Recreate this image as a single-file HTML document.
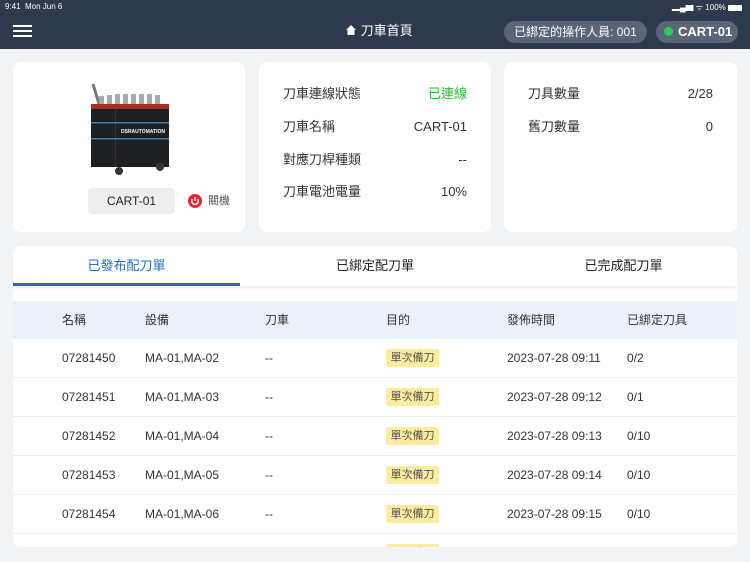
<!DOCTYPE html>
<html><head><meta charset="utf-8"><style>
*{margin:0;padding:0;box-sizing:border-box}
body{width:750px;height:562px;background:#f2f3f5;font-family:"Liberation Sans","Noto Sans CJK TC",sans-serif;position:relative;overflow:hidden;color:#333}
.top{position:absolute;left:0;top:0;width:750px;height:49px;background:#2e3a4b;color:#fff}
.card{position:absolute;background:#fff;border-radius:8px}
.row{position:absolute;font-size:13px;color:#333;line-height:18px;height:18px}
.abs{position:absolute}
span.abs{line-height:16px}
</style></head><body>
<div class="top">
 <div class="abs" style="left:5px;top:2px;font-size:8px">9:41&nbsp; Mon Jun 6</div>
 <div class="abs" style="right:8px;top:2px;font-size:8px">▂▄▆ ᯤ 100% <span style="display:inline-block;width:14px;height:6px;background:#fff;border-radius:1px;vertical-align:middle"></span></div>
 <div class="abs" style="left:13px;top:25px;width:19px;height:2px;background:#fff;box-shadow:0 5px 0 #fff,0 10px 0 #fff"></div>
 <div class="abs" style="left:345px;top:22px;font-size:13px;line-height:18px">
  <svg width="12" height="12" viewBox="0 0 12 12" style="vertical-align:-1px"><path d="M6 1L1 6h1.5v5h7V6H11z" fill="#fff"/></svg>&nbsp;刀車首頁</div>
 <div class="abs" style="left:504px;top:21px;width:143px;height:22px;border-radius:11px;background:#5a6577;font-size:12px;text-align:center;line-height:22px">已綁定的操作人員: 001</div>
 <div class="abs" style="left:656px;top:21px;width:82px;height:22px;border-radius:11px;background:#5a6577;font-size:13px;font-weight:bold;line-height:22px;padding-left:8px"><span style="display:inline-block;width:9px;height:9px;border-radius:50%;background:#2ecc55;margin-right:5px"></span>CART-01</div>
</div>

<div class="card" style="left:13px;top:62px;width:232px;height:170px">
 <svg class="abs" style="left:72px;top:20px" width="90" height="96" viewBox="0 0 90 96">
  <line x1="8" y1="2" x2="14" y2="22" stroke="#777" stroke-width="3"/>
  <g fill="#a9a9a9"><rect x="14" y="14" width="5" height="11"/><rect x="22" y="13" width="5" height="11"/><rect x="30" y="12" width="5" height="11"/><rect x="38" y="12" width="5" height="11"/><rect x="46" y="12" width="5" height="11"/><rect x="54" y="12" width="5" height="11"/><rect x="62" y="12" width="5" height="11"/><rect x="70" y="13" width="5" height="11"/></g>
  <rect x="6" y="22" width="78" height="7" fill="#a03020"/>
  <rect x="6" y="27" width="78" height="58" fill="#1e1f22"/>
  <rect x="30" y="27" width="1" height="58" fill="#333"/>
  <rect x="6" y="40" width="78" height="1.5" fill="#3a7fb5"/><rect x="6" y="56" width="78" height="1.5" fill="#3a7fb5"/>
  <text x="36" y="51" font-size="5" font-weight="bold" fill="#fff" font-family="Liberation Sans">DSRAUTOMATION</text>
  <circle cx="34" cy="89" r="4" fill="#333"/><circle cx="75" cy="85" r="4" fill="#333"/>
 </svg>
 <div class="abs" style="left:75px;top:126px;width:87px;height:26px;background:#eeeeee;border-radius:4px;text-align:center;line-height:26px;font-size:12px;color:#222">CART-01</div>
 <div class="abs" style="left:175px;top:132px;width:14px;height:14px;border-radius:50%;background:#e5262e"></div>
 <svg class="abs" style="left:175px;top:132px" width="14" height="14" viewBox="0 0 14 14"><path d="M4.5 5a3.3 3.3 0 1 0 5 0" stroke="#fff" stroke-width="1.4" fill="none"/><line x1="7" y1="3" x2="7" y2="7" stroke="#fff" stroke-width="1.4"/></svg>
 <div class="abs" style="left:195px;top:131px;font-size:11px;color:#555;line-height:16px">關機</div>
</div>

<div class="card" style="left:259px;top:62px;width:232px;height:170px">
 <div class="row" style="left:24px;top:23px">刀車連線狀態</div><div class="row" style="right:24px;top:23px;color:#2eb82e">已連線</div>
 <div class="row" style="left:24px;top:56px">刀車名稱</div><div class="row" style="right:24px;top:56px">CART-01</div>
 <div class="row" style="left:24px;top:89px">對應刀桿種類</div><div class="row" style="right:24px;top:89px">--</div>
 <div class="row" style="left:24px;top:121px">刀車電池電量</div><div class="row" style="right:24px;top:121px">10%</div>
</div>

<div class="card" style="left:504px;top:62px;width:233px;height:170px">
 <div class="row" style="left:24px;top:23px">刀具數量</div><div class="row" style="right:24px;top:23px">2/28</div>
 <div class="row" style="left:24px;top:56px">舊刀數量</div><div class="row" style="right:24px;top:56px">0</div>
</div>

<div class="card" style="left:13px;top:246px;width:724px;height:301px;overflow:hidden">
 <div class="abs" style="left:0;top:0;width:724px;height:40px;box-shadow:0 3px 4px rgba(0,0,0,0.06)"></div>
 <div class="abs" style="left:0;top:11px;width:227px;text-align:center;font-size:13px;color:#1f6fbf;line-height:18px">已發布配刀單</div>
 <div class="abs" style="left:250px;top:11px;width:224px;text-align:center;font-size:13px;color:#222;line-height:18px">已綁定配刀單</div>
 <div class="abs" style="left:497px;top:11px;width:227px;text-align:center;font-size:13px;color:#222;line-height:18px">已完成配刀單</div>
 <div class="abs" style="left:0;top:37px;width:227px;height:3px;background:#1f6fbf"></div>
 <div class="abs" style="left:0;top:55px;width:724px;height:38px;background:#ecf0f8;font-size:12px;color:#333">
   <span class="abs" style="left:49px;top:11px">名稱</span><span class="abs" style="left:132px;top:11px">設備</span><span class="abs" style="left:252px;top:11px">刀車</span><span class="abs" style="left:373px;top:11px">目的</span><span class="abs" style="left:494px;top:11px">發佈時間</span><span class="abs" style="left:614px;top:11px">已綁定刀具</span>
 </div>
 <div id="rows"></div>
</div>
<script>
var d=[["07281450","MA-01,MA-02","09:11","0/2"],["07281451","MA-01,MA-03","09:12","0/1"],["07281452","MA-01,MA-04","09:13","0/10"],["07281453","MA-01,MA-05","09:14","0/10"],["07281454","MA-01,MA-06","09:15","0/10"],["","","",""]];
var h="";d.forEach(function(r,i){var t=93+i*39;
h+='<div style="position:absolute;left:0;top:'+t+'px;width:724px;height:39px;border-bottom:1px solid #eceef1;font-size:12px;color:#333">'+
'<span class="abs" style="left:49px;top:11px">'+r[0]+'</span><span class="abs" style="left:132px;top:11px">'+r[1]+'</span><span class="abs" style="left:252px;top:11px">'+(r[0]?'--':'')+'</span>'+
'<span class="abs" style="left:373px;top:10px;width:53px;height:18px;background:#fdeba0;border-radius:2px;font-size:11px;line-height:18px;text-align:center;color:#555">單次備刀</span>'+
'<span class="abs" style="left:494px;top:11px">'+(r[2]?'2023-07-28 '+r[2]:'')+'</span><span class="abs" style="left:614px;top:11px">'+r[3]+'</span></div>';});
document.getElementById("rows").innerHTML=h;
</script>
</body></html>
